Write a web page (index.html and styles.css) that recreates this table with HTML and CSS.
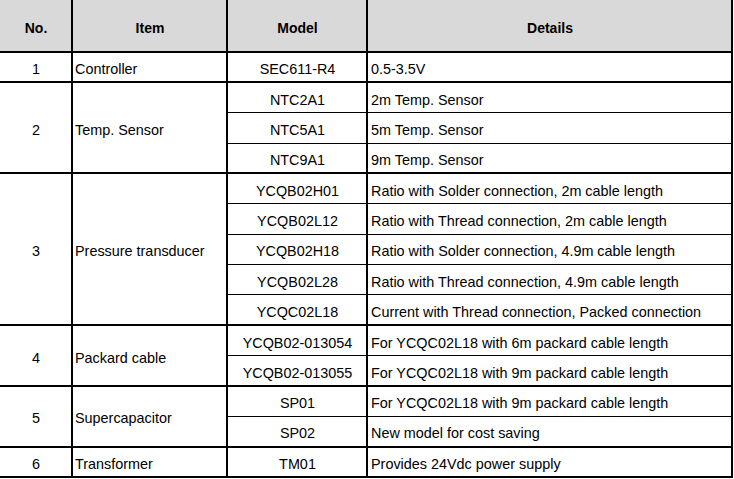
FILE: index.html
```html
<!DOCTYPE html>
<html lang="en">
<head>
  <meta charset="UTF-8">
  <title>Parts list</title>
  <link rel="stylesheet" href="styles.css">
</head>
<body>
  <table class="parts">
    <colgroup>
      <col class="c-no">
      <col class="c-item">
      <col class="c-model">
      <col class="c-details">
    </colgroup>
    <thead>
      <tr>
        <th>No.</th>
        <th>Item</th>
        <th>Model</th>
        <th>Details</th>
      </tr>
    </thead>
    <tbody>
      <tr class="grp">
        <td class="no">1</td>
        <td class="item">Controller</td>
        <td class="model">SEC611-R4</td>
        <td>0.5-3.5V</td>
      </tr>

      <tr class="grp">
        <td class="no" rowspan="3">2</td>
        <td class="item" rowspan="3">Temp. Sensor</td>
        <td class="model">NTC2A1</td>
        <td>2m Temp. Sensor</td>
      </tr>
      <tr>
        <td class="model">NTC5A1</td>
        <td>5m Temp. Sensor</td>
      </tr>
      <tr>
        <td class="model">NTC9A1</td>
        <td>9m Temp. Sensor</td>
      </tr>

      <tr class="grp">
        <td class="no" rowspan="5">3</td>
        <td class="item" rowspan="5">Pressure transducer</td>
        <td class="model">YCQB02H01</td>
        <td>Ratio with Solder connection, 2m cable length</td>
      </tr>
      <tr>
        <td class="model">YCQB02L12</td>
        <td>Ratio with Thread connection, 2m cable length</td>
      </tr>
      <tr>
        <td class="model">YCQB02H18</td>
        <td>Ratio with Solder connection, 4.9m cable length</td>
      </tr>
      <tr>
        <td class="model">YCQB02L28</td>
        <td>Ratio with Thread connection, 4.9m cable length</td>
      </tr>
      <tr>
        <td class="model">YCQC02L18</td>
        <td>Current with Thread connection, Packed connection</td>
      </tr>

      <tr class="grp">
        <td class="no" rowspan="2">4</td>
        <td class="item" rowspan="2">Packard cable</td>
        <td class="model">YCQB02-013054</td>
        <td>For YCQC02L18 with 6m packard cable length</td>
      </tr>
      <tr>
        <td class="model">YCQB02-013055</td>
        <td>For YCQC02L18 with 9m packard cable length</td>
      </tr>

      <tr class="grp">
        <td class="no" rowspan="2">5</td>
        <td class="item" rowspan="2">Supercapacitor</td>
        <td class="model">SP01</td>
        <td>For YCQC02L18 with 9m packard cable length</td>
      </tr>
      <tr>
        <td class="model">SP02</td>
        <td>New model for cost saving</td>
      </tr>

      <tr class="grp">
        <td class="no">6</td>
        <td class="item">Transformer</td>
        <td class="model">TM01</td>
        <td>Provides 24Vdc power supply</td>
      </tr>
    </tbody>
  </table>
</body>
</html>
```

FILE: styles.css
```css
* {
  box-sizing: border-box;
}

body {
  margin: 0;
  background-color: #fff;
  font-family: "Liberation Sans", Arial, sans-serif;
  color: #000;
}

.parts {
  border-collapse: collapse;
  table-layout: fixed;
  width: 735px;
  margin: -2px 0 0 -2px;
  border: 2px solid #000;
  font-size: 14.4px;
}

.c-no { width: 73px; }
.c-item { width: 155px; }
.c-model { width: 140px; }
.c-details { width: 365px; }

.parts th,
.parts td {
  border: 1px solid #000;
  border-left-width: 2px;
  border-right-width: 2px;
  padding: 4px 2px 0 3px;
  vertical-align: middle;
  text-align: left;
  white-space: nowrap;
}

.parts th {
  height: 53px;
  background-color: #d9d9d9;
  border-bottom-width: 2px;
  font-size: 14px;
  text-align: center;
}

.parts tbody tr {
  height: 30.36px;
}

.parts tr.grp > td {
  border-top-width: 2px;
}

.parts td.item {
  padding-left: 2px;
}

.parts td.no,
.parts td.model {
  text-align: center;
}
```
